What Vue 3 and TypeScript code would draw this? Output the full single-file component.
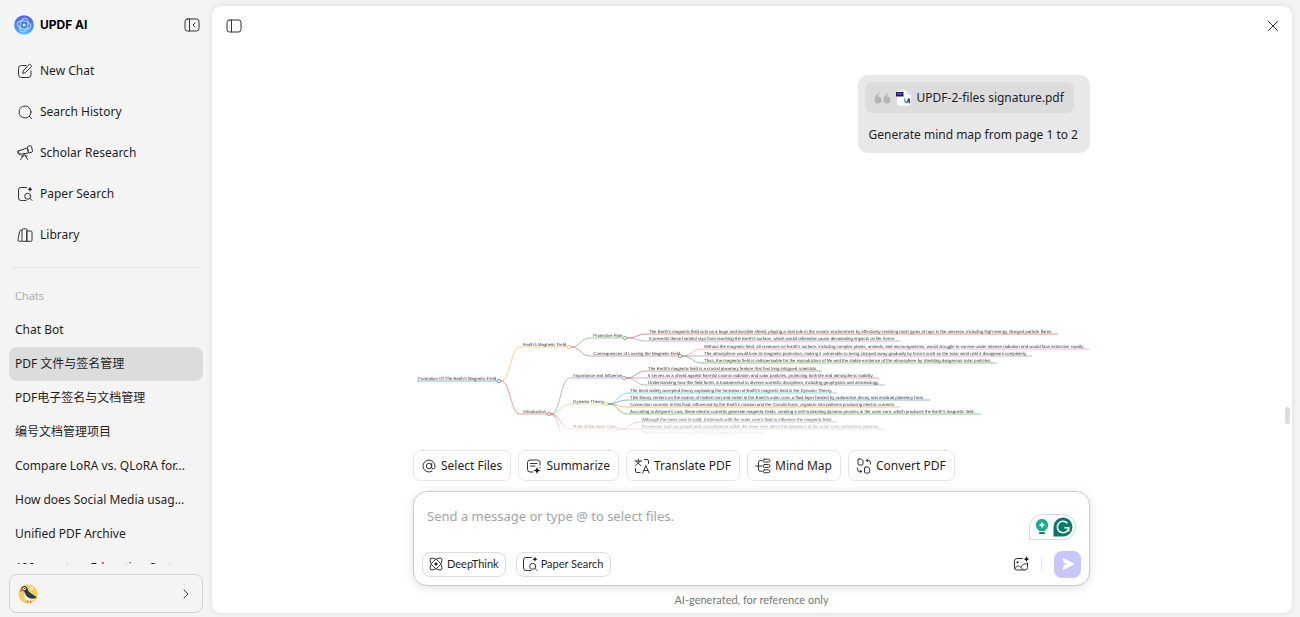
<script setup lang="ts">
interface NavItem { label: string; icon: string }
interface Leaf { x: number; y: number; end: number; from: [number, number]; color: string; text: string }
interface Branch { label: string; x: number; y: number; end: number; from: [number, number] | null; color: string }

const icons: Record<string, string[]> = {
  compose: ['M9 2.500H4.500a3 3 0 0 0-3 3v6a3 3 0 0 0 3 3h6.500a3 3 0 0 0 3-3V8', 'M12.900 1.300l1.900 1.900-6.500 6.500-2.600.7.7-2.600z'],
  search: ['M14 8a6 6 0 1 1-12 0 6 6 0 0 1 12 0z', 'M12.300 12.300L14.700 14.700'],
  telescope: ['M1.500 5.800L10.400 3l1.100 5-8.600 1.300z', 'M10.400 2.300a1 1 0 0 1 .7-1l2.200-.5a1 1 0 0 1 1.200.7l1 4.500a1 1 0 0 1-.8 1.200l-2.100.5a1 1 0 0 1-1.200-.7z', 'M1.500 5.800a1.200 1.200 0 0 0-.7 1.500l.4 1.300a1.200 1.200 0 0 0 1.700.7', 'M7 9.200l-3.300 5.300', 'M7.500 9.200l3.200 5.300', 'M4.500 11h2M8 11h2'],
  paper: ['M9.500 1.500H4a2.500 2.500 0 0 0-2.500 2.500v8A2.500 2.500 0 0 0 4 14.500h1.500', 'M13.700 10.300a3 3 0 1 1-6 0 3 3 0 0 1 6 0z', 'M13 12.500l2 2', 'M6.500 14.500h2.500'],
  library: ['M5 3.300H3.800a1.200 1.200 0 0 0-1.200 1L1 12.800a1.200 1.200 0 0 0 1.200 1.400H5', 'M5 3a1.200 1.200 0 0 1 1.200-1.200h2.600A1.200 1.200 0 0 1 10 3v11.300H6.200A1.200 1.200 0 0 1 5 13.100z', 'M10 4h3.800A1.200 1.200 0 0 1 15 5.200v8a1.200 1.200 0 0 1-1.200 1.100H10z'],
  at: ['M10.600 8a2.600 2.800 0 1 1-5.200 0 2.600 2.800 0 0 1 5.200 0z', 'M10.800 5.200L10.500 9a1.700 1.700 0 0 0 3.500.2V8a6 6 0 1 0-2.900 5.200'],
  summarize: ['M14 7V4.500A2.500 2.500 0 0 0 11.500 2H4a2.500 2.500 0 0 0-2.500 2.500v7A2.500 2.500 0 0 0 4 14h3', 'M4.500 5.500h6.500M4.500 8h4.500'],
  translate: ['M1 3h6.500M4.300 1.200V3M2.300 3.200l4.500 4.500M6.500 3L1.500 7.700', 'M10.500 1.500h2.500a1.500 1.500 0 0 1 1.500 1.500v2.500', 'M1.500 10.500V13A1.500 1.500 0 0 0 3 14.500h3', 'M8.700 15l3.100-7.500L15 15M9.800 12.500h4'],
  mindmap: ['M.8 8h6M7 2.700H5.200a1.700 1.700 0 0 0-1.700 1.700v7.200a1.700 1.700 0 0 0 1.700 1.700H7', 'M9.500 1.200h4a1.400 1.400 0 0 1 0 2.900h-4a1.400 1.400 0 0 1 0-2.900z', 'M9.500 6.500h4a1.400 1.400 0 0 1 0 2.900h-4a1.400 1.400 0 0 1 0-2.900z', 'M9.500 11.800h4a1.400 1.400 0 0 1 0 2.900h-4a1.400 1.400 0 0 1 0-2.900z'],
  convert: ['M3 1h2.500L7 2.500V6a1 1 0 0 1-1 1H3a1 1 0 0 1-1-1V2a1 1 0 0 1 1-1z', 'M9.500 9H12l1.700 1.500V14a1 1 0 0 1-1 1H9.500a1 1 0 0 1-1-1v-4a1 1 0 0 1 1-1z', 'M14.500 6V4.500a2 2 0 0 0-2-2H10.300M11.800 1L10.300 2.500l1.500 1.500', 'M1.500 10v1.500a2 2 0 0 0 2 2h2M4.200 12L5.700 13.500 4.200 15'],
  atom: ['M2.600 13.400A7.600 3.700 -45 0 1 13.400 2.600A7.600 3.700 -45 0 1 2.600 13.400z', 'M2.600 2.600A7.600 3.700 45 0 1 13.400 13.400A7.600 3.700 45 0 1 2.600 2.600z'],
  image: ['M9.500 2.500H4A2.500 2.500 0 0 0 1.500 5v6.500A2.500 2.500 0 0 0 4 14h8a2.500 2.500 0 0 0 2.500-2.500V7', 'M1.800 12.800c1.700-3 3.500-4 5.700-1.800L10.500 14', 'M8 11c1.500-2.500 3.500-3.800 6.300-3.200']
}
const sparkle: Record<string, string> = {
  paper: 'M13 .8l.8 1.700 1.700.8-1.700.8-.8 1.700-.8-1.700-1.700-.8 1.700-.8z',
  summarize: 'M11 9l1 2.500 2.500 1-2.500 1-1 2.500-1-2.500-2.500-1 2.500-1zM14 9.200a.6.600 0 1 1 0 1.200.6.600 0 0 1 0-1.200z',
  atom: 'M8 6.500a1.500 1.500 0 1 1 0 3 1.500 1.500 0 0 1 0-3z',
  image: 'M13.500.2l.9 2 2 .9-2 .9-.9 2-.9-2-2-.9 2-.9zM4.500 5.200a1 1 0 1 1 0 2 1 1 0 0 1 0-2z'
}

const nav: NavItem[] = [
  { label: 'New Chat', icon: 'compose' },
  { label: 'Search History', icon: 'search' },
  { label: 'Scholar Research', icon: 'telescope' },
  { label: 'Paper Search', icon: 'paper' },
  { label: 'Library', icon: 'library' }
]
const chats = [
  'Chat Bot', 'PDF 文件与签名管理', 'PDF电子签名与文档管理', '编号文档管理项目',
  'Compare LoRA vs. QLoRA for...', 'How does Social Media usag...', 'Unified PDF Archive', 'AI Impact on Education Syst...'
]
const actions: NavItem[] = [
  { label: 'Select Files', icon: 'at' },
  { label: 'Summarize', icon: 'summarize' },
  { label: 'Translate PDF', icon: 'translate' },
  { label: 'Mind Map', icon: 'mindmap' },
  { label: 'Convert PDF', icon: 'convert' }
]
const tools: NavItem[] = [
  { label: 'DeepThink', icon: 'atom' },
  { label: 'Paper Search', icon: 'paper' }
]

/* Node positions are in grid cells; one cell is three drawing units. */
const CELL = 3
const branches: Branch[] = [
  { label: "Formation Of The Earth's Magnetic Field", x: 4, y: 60, end: 84, from: null, color: '#1f77b4' },
  { label: "Earth's Magnetic Field", x: 109, y: 26, end: 154, from: [88, 60], color: '#ff9d45' },
  { label: 'Introduction', x: 109, y: 93, end: 134, from: [88, 60], color: '#c9403f' },
  { label: 'Protective Role', x: 179, y: 17, end: 210, from: [158, 26], color: '#43a643' },
  { label: 'Consequences of Loosing the Magnetic Field', x: 179, y: 35, end: 265, from: [158, 26], color: '#8c564b' },
  { label: 'Importance and Influence', x: 159, y: 57, end: 209, from: [138, 93], color: '#9467bd' },
  { label: 'Dynamo Theory', x: 159, y: 83, end: 191, from: [138, 93], color: '#c9ca3e' },
  { label: 'Role of the Inner Core', x: 159, y: 108, end: 203, from: [138, 93], color: '#d0505a' }
]
const leaves: Leaf[] = [
  { x: 236, y: 13, end: 645, from: [214, 17], color: '#d62728', text: "The Earth's magnetic field acts as a huge and invisible shield, playing a vital role in the cosmic environment by effectively resisting most types of rays in the universe, including high-energy charged particle flares." },
  { x: 236, y: 20, end: 487, from: [214, 17], color: '#9467bd', text: "It prevents these harmful rays from reaching the Earth's surface, which would otherwise cause devastating impacts on life forms." },
  { x: 291, y: 28, end: 677, from: [269, 35], color: '#e377c2', text: "Without the magnetic field, all creatures on Earth's surface, including complex plants, animals, and microorganisms, would struggle to survive under intense radiation and would face extinction rapidly." },
  { x: 291, y: 35, end: 619, from: [269, 35], color: '#7f7f7f', text: 'The atmosphere would lose its magnetic protection, making it vulnerable to being stripped away gradually by forces such as the solar wind until it disappears completely.' },
  { x: 291, y: 42, end: 584, from: [269, 35], color: '#2ca02c', text: 'Thus, the magnetic field is indispensable for the reproduction of life and the stable existence of the atmosphere by shielding dangerous solar particles.' },
  { x: 235, y: 50, end: 409, from: [213, 57], color: '#8c564b', text: "The Earth's magnetic field is a crucial planetary feature that has long intrigued scientists." },
  { x: 235, y: 57, end: 466, from: [213, 57], color: '#b455a8', text: 'It serves as a shield against harmful cosmic radiation and solar particles, protecting both life and atmospheric stability.' },
  { x: 235, y: 64, end: 472, from: [213, 57], color: '#7f7f7f', text: 'Understanding how this field forms is fundamental to diverse scientific disciplines, including geophysics and astrobiology.' },
  { x: 217, y: 72, end: 424, from: [195, 83], color: '#17becf', text: "The most widely accepted theory explaining the formation of Earth's magnetic field is the Dynamo Theory." },
  { x: 217, y: 79, end: 517, from: [195, 83], color: '#1f77b4', text: "This theory centers on the motion of molten iron and nickel in the Earth's outer core, a fluid layer heated by radioactive decay and residual planetary heat." },
  { x: 217, y: 86, end: 487, from: [195, 83], color: '#ff7f0e', text: "Convection currents in this fluid, influenced by the Earth's rotation and the Coriolis force, organize into patterns producing electric currents." },
  { x: 217, y: 93, end: 568, from: [195, 83], color: '#2ca02c', text: "According to Ampere's Law, these electric currents generate magnetic fields, creating a self-sustaining dynamo process in the outer core, which produces the Earth's magnetic field." },
  { x: 229, y: 101, end: 424, from: [207, 108], color: '#9467bd', text: "Although the inner core is solid, it interacts with the outer core's fluid to influence the magnetic field." },
  { x: 229, y: 108, end: 472, from: [207, 108], color: '#8c564b', text: 'Processes such as growth and crystallization within the inner core affect the dynamics of the outer core convection patterns.' },
  { x: 229, y: 114, end: 355, from: [207, 108], color: '#e377c2', text: 'These interactions have an impact on magnetic field generation.' }
]
function link(from: [number, number] | null, x: number, y: number, end: number): string {
  if (!from) return `M${x * CELL} ${y * CELL}H${end * CELL}`
  const [fx, fy] = [from[0] * CELL, from[1] * CELL]
  const tx = (x - 2) * CELL
  const ty = y * CELL
  const mid = (fx + tx) / 2
  return `M${fx} ${fy}C${mid} ${fy} ${mid} ${ty} ${tx} ${ty}H${end * CELL}`
}
</script>

<template>
  <div class="app">
    <aside class="sidebar">
      <header class="brand">
        <svg class="logo" width="20" height="20" viewBox="0 0 20 20" aria-hidden="true">
          <defs>
            <linearGradient id="logoFill" x1="0" y1="0" x2="0" y2="1">
              <stop offset="0" stop-color="#5a5cf0" />
              <stop offset="0.6" stop-color="#3f8df6" />
              <stop offset="1" stop-color="#5ccbfa" />
            </linearGradient>
          </defs>
          <circle cx="10" cy="10" r="9.800" fill="url(#logoFill)" />
          <g fill="none" stroke="#b9dcff" stroke-width="1">
            <ellipse cx="10" cy="10" rx="7" ry="4" transform="rotate(12 10 10)" />
            <ellipse cx="10" cy="10" rx="4" ry="7" transform="rotate(12 10 10)" />
          </g>
          <circle cx="10" cy="10" r="1.300" fill="#fff" />
        </svg>
        <strong class="brand-name">UPDF AI</strong>
        <button class="bare" type="button" aria-label="Collapse sidebar">
          <svg width="16" height="16" viewBox="0 0 16 16" class="line">
            <rect x="1" y="2" width="14" height="12" rx="2.500" /><path d="M5.500 2v12M11 6L9 8l2 2" />
          </svg>
        </button>
      </header>

      <nav class="nav">
        <a v-for="item in nav" :key="item.label" href="#" class="nav-item">
          <svg width="16" height="16" viewBox="0 0 16 16" class="line">
            <path v-for="d in icons[item.icon]" :key="d" :d="d" />
            <path v-if="sparkle[item.icon]" class="solid" :d="sparkle[item.icon]" />
          </svg>
          <span>{{ item.label }}</span>
        </a>
      </nav>

      <section class="history">
        <h2>Chats</h2>
        <div class="chat-list">
          <a v-for="(chat, i) in chats" :key="chat" href="#" class="chat" :class="{ active: i === 1 }">{{ chat }}</a>
        </div>
      </section>

      <button class="account" type="button" aria-label="Account">
        <svg width="20" height="20" viewBox="0 0 20 20" aria-hidden="true">
          <circle cx="10" cy="10" r="9.500" fill="#f8cc55" />
          <circle cx="13.500" cy="4.500" r="1.800" fill="#fff0b8" />
          <path d="M6 9c-1 5 2 8 6 8 3 0 4-1 5-3z" fill="#f6f1e4" />
          <path d="M3.500 4.500C3.500 2 7.500 1 9.300 3.800c.7 1.700.3 3 2.200 4.500l6.500 4.500c1 1 .3 1.500-.5 1.300-3 1.500-7 .5-9.300-2.600C6.500 9.200 7 7.500 5.500 7z" fill="#2c3a44" />
          <circle cx="6.400" cy="4.600" r="1.600" fill="#eee" />
          <circle cx="6.500" cy="4.500" r=".6" fill="#222" />
          <path d="M4.700 4.200C2.500 4 1.800 6.500 2.500 8c1.200-.8 2.500-.8 3.200-1.700z" fill="#d9652c" />
          <path d="M9.500 16.500v2M12.500 16.800v2" stroke="#d9652c" stroke-width="1.200" />
        </svg>
        <svg width="12" height="12" viewBox="0 0 12 12" class="line"><path d="M4 2l4 4-4 4" /></svg>
      </button>
    </aside>

    <main class="panel">
      <header class="topbar">
        <button class="bare" type="button" aria-label="Toggle panel">
          <svg width="16" height="16" viewBox="0 0 16 16" class="line">
            <rect x="1" y="2" width="14" height="12" rx="2.500" /><path d="M5.500 2v12" />
          </svg>
        </button>
        <button class="bare" type="button" aria-label="Close">
          <svg width="12" height="12" viewBox="0 0 12 12" class="line"><path d="M1.500 1.500l9 9M10.500 1.500l-9 9" /></svg>
        </button>
      </header>

      <div class="column">
        <div class="thread">
          <article class="bubble">
            <a href="#" class="file">
              <svg width="17" height="12" viewBox="0 0 17 12" class="quote" aria-hidden="true">
                <path d="M6.500.5C3 1.500.5 4 .5 8a3.500 3.500 0 1 0 3.200-3.500C4 3 5 1.800 6.500.5z" />
                <path d="M15.500.5C12 1.500 9.500 4 9.500 8a3.500 3.500 0 1 0 3.200-3.500C13 3 14 1.800 15.500.5z" />
              </svg>
              <svg width="16" height="16" viewBox="0 0 16 16" aria-hidden="true">
                <path d="M3 .5h7.500L15 5v8.500a2 2 0 0 1-2 2H3a2 2 0 0 1-2-2v-11a2 2 0 0 1 2-2z" fill="#fff" />
                <path d="M10.500.5L15 5h-3a1.500 1.500 0 0 1-1.500-1.500z" fill="#dfe3f2" />
                <rect x="0" y="2" width="7.500" height="4.500" rx=".5" fill="#20177e" />
                <path d="M1.500 3.500h1v1.500M3.500 3.500h1v1.500M5.700 3.500h1" stroke="#a9a3e6" stroke-width=".6" fill="none" />
                <path d="M8.700 8.500v2a2 2 0 0 0 2 2" fill="none" stroke="#3fa0f5" stroke-width="1.300" />
                <path d="M10.500 12.500c1.700 0 .8-3.500 2.700-3.500v3.500h1" fill="none" stroke="#2b28d8" stroke-width="1.300" />
              </svg>
              <span>UPDF-2-files signature.pdf</span>
            </a>
            <p>Generate mind map from page 1 to 2</p>
          </article>

          <svg class="map" viewBox="0 0 2031 345" role="img" aria-label="Mind map">
            <g v-for="leaf in leaves" :key="leaf.text">
              <path class="branch" :d="link(leaf.from, leaf.x, leaf.y, leaf.end)" :stroke="leaf.color" />
              <text :x="leaf.x * CELL" :y="leaf.y * CELL - 3">{{ leaf.text }}</text>
            </g>
            <g v-for="b in branches" :key="b.label">
              <path class="branch" :d="link(b.from, b.x, b.y, b.end)" :stroke="b.color" />
              <text :x="b.x * CELL + 4" :y="b.y * CELL - 3">{{ b.label }}</text>
              <circle class="dot" :cx="b.end * CELL + 6" :cy="b.y * CELL" r="5" :stroke="b.color" />
            </g>
            <path class="branch" d="M414 279c15 3 21 27 30 66" stroke="#7f7f7f" />
          </svg>
        </div>

        <div class="actions">
          <button v-for="a in actions" :key="a.label" type="button" class="chip">
            <svg width="16" height="16" viewBox="0 0 16 16" class="line">
              <path v-for="d in icons[a.icon]" :key="d" :d="d" />
              <path v-if="sparkle[a.icon]" class="solid" :d="sparkle[a.icon]" />
            </svg>
            <span>{{ a.label }}</span>
          </button>
        </div>

        <form class="composer" @submit.prevent>
          <textarea rows="1" aria-label="Message" placeholder="Send a message or type @ to select files."></textarea>
          <div class="assist">
            <svg width="14" height="18" viewBox="0 0 14 18" aria-hidden="true">
              <path d="M7 1a6 6 0 0 1 4 10.500L10 13H4l-1-1.500A6 6 0 0 1 7 1z" fill="#0fae8e" />
              <path d="M7 3.500l1 2.500 2.500 1L8 8l-1 2.500L6 8 3.500 7 6 6z" fill="#fff" />
              <rect x="4" y="14" width="6" height="2" rx="1" fill="#0b7f6c" />
            </svg>
            <svg width="20" height="20" viewBox="0 0 20 20" aria-hidden="true">
              <path d="M10 .5a9.500 9.500 0 1 1 0 19H.5V10A9.500 9.500 0 0 1 10 .5z" fill="#047a68" />
              <path d="M14.300 6.200A5.700 5.700 0 1 0 15.700 10.800H11.300M13.500 10.800h2.200v3.700" fill="none" stroke="#fff" stroke-width="1.600" />
            </svg>
          </div>
          <div class="composer-row">
            <button v-for="t in tools" :key="t.label" type="button" class="tool">
              <svg width="16" height="16" viewBox="0 0 16 16" class="line">
                <path v-for="d in icons[t.icon]" :key="d" :d="d" />
                <path class="solid" :d="sparkle[t.icon]" />
              </svg>
              <span>{{ t.label }}</span>
            </button>
            <button type="button" class="bare image" aria-label="Add image">
              <svg width="16" height="16" viewBox="0 0 16 16" class="line">
                <path v-for="d in icons.image" :key="d" :d="d" />
                <path class="solid" :d="sparkle.image" />
              </svg>
            </button>
            <i class="divider"></i>
            <button type="submit" class="send" aria-label="Send">
              <svg width="14" height="14" viewBox="0 0 14 14" aria-hidden="true"><path d="M1.800 1.500Q1.500.8 2.300 1L13 6.400q.8.600 0 1.200L2.300 13q-.8.200-.5-.6L3 8l5-1-5-1z" fill="#fff" /></svg>
            </button>
          </div>
        </form>
        <p class="note">AI-generated, for reference only</p>
      </div>
      <i class="thumb"></i>
    </main>
  </div>
</template>

<style>
body { margin: 0; background: #f2f2f2; }
</style>

<style scoped>
* { box-sizing: border-box; }
.app {
  display: flex;
  height: 100vh;
  background: #f4f4f4;
  color: #1f1f1f;
  font-family: "Noto Sans", "Noto Sans CJK SC", sans-serif;
  font-size: 12px;
  line-height: 20px;
  overflow: hidden;
}
button, textarea { font: inherit; color: inherit; }
a { color: inherit; text-decoration: none; }
svg { flex: none; }
.line { fill: none; stroke: #333; stroke-width: 1; stroke-linecap: round; stroke-linejoin: round; }
.solid { fill: #111; stroke: none; }
.bare { display: flex; padding: 0; border: 0; background: none; }

.sidebar { display: flex; flex: none; flex-direction: column; width: 212px; padding: 0 9px 4px; }
.brand { display: flex; align-items: center; height: 50px; padding: 0 3px 0 5px; }
.brand-name { flex: 1; margin-left: 6px; color: #000; font-family: Inter, sans-serif; font-size: 12px; font-weight: 700; }
.nav { padding-bottom: 12px; margin: 0 3px; border-bottom: 1px solid #e2e4e5; }
.nav-item { display: flex; gap: 7px; align-items: center; height: 41px; padding-left: 5px; }
.history { display: flex; flex: 1; flex-direction: column; min-height: 0; margin-bottom: 10px; }
h2 { margin: 18px 6px 7px; color: #aaa; font-family: "Open Sans", sans-serif; font-size: 11px; font-weight: 400; line-height: 20px; }
.chat-list { flex: 1; min-height: 0; overflow: hidden; }
.chat { display: block; height: 34px; padding: 0 6px; border-radius: 8px; line-height: 34px; white-space: nowrap; }
.active { background: #dcdcdc; }
.account {
  display: flex; align-items: center; justify-content: space-between; height: 39px; flex: none;
  padding: 0 10px 0 8px; border: 1px solid #d2d2d2; border-radius: 8px; background: none;
}

.panel {
  position: relative; display: flex; flex: 1; flex-direction: column; min-width: 0; padding-right: 1px;
  margin: 6px 8px 4px 0; border-radius: 9px; background: #fff; box-shadow: 0 0 6px rgba(0, 0, 0, 0.1);
}
.topbar { display: flex; flex: none; align-items: center; justify-content: space-between; height: 39px; padding: 0 12px 0 14px; }
.column { display: flex; flex: 1; flex-direction: column; width: 100%; max-width: 677px; min-height: 0; margin: 0 auto; }
.thread { display: flex; flex: 1; flex-direction: column; justify-content: space-between; min-height: 0; padding-top: 30px; }
.bubble { align-self: flex-end; padding: 7px 12px 8px 7px; border-radius: 10px; background: #e8e8e8; }
.file { display: flex; gap: 5px; align-items: center; width: fit-content; height: 31px; padding: 0 10px 0 9px; border-radius: 8px; background: #dcdcdc; }
.quote { fill: #b5b5b5; }
.bubble p { margin: 12px 0 0 4px; }
.map {
  width: 100%; font-family: "Liberation Sans", sans-serif; font-size: 13px;
  mask-image: linear-gradient(#000 82%, transparent);
}
.map text { fill: #333; text-rendering: geometricPrecision; }
.branch { fill: none; stroke-width: 2; opacity: 0.8; }
.dot { fill: #fff; stroke-width: 2; }

.actions { display: flex; flex: none; gap: 7px; margin-top: 14px; }
.chip { display: flex; gap: 4px; align-items: center; height: 31px; padding: 0 8px 0 7px; border: 1px solid #e2e6e6; border-radius: 7px; background: #fff; white-space: nowrap; }
.composer {
  position: relative; display: flex; flex: none; flex-direction: column; height: 95px; margin-top: 10px;
  padding: 14px 8px 7px; border: 1px solid #ccc; border-radius: 14px; background: #fff; box-shadow: 0 2px 10px rgba(0, 0, 0, 0.12);
}
textarea { height: 22px; padding: 0; margin: 0 5px; border: 0; outline: 0; background: none; resize: none; font-size: 13px; }
textarea::placeholder { color: #a3a3a3; opacity: 1; }
.assist {
  position: absolute; top: 22px; right: 13px; display: flex; gap: 4px; align-items: center; height: 26px; padding: 0 2px 0 5px;
  border: 1px solid #d5d7df; border-radius: 13px 13px 13px 0; background: #fff;
}
.composer-row { display: flex; align-items: center; height: 28px; margin-top: auto; }
.tool { display: flex; gap: 3px; align-items: center; height: 25px; padding: 0 6px 0 5px; margin-right: 10px; border: 1px solid #dcdcdc; border-radius: 8px; background: #fff; font-family: Lato, sans-serif; font-size: 11px; }
.image { margin-left: auto; }
.divider { width: 1px; height: 14px; margin: 0 12px; background: #e5e5e5; }
.send { display: flex; align-items: center; justify-content: center; width: 27px; height: 27px; padding: 0; border: 0; border-radius: 8px; background: #c8c6fb; }
.note { flex: none; margin: 4px 0 3px; color: #777; font-family: Lato, sans-serif; font-size: 11px; text-align: center; }
.thumb { position: absolute; top: 401px; right: 2px; width: 5px; height: 17px; border-radius: 3px; background: #dcdcde; }
</style>
